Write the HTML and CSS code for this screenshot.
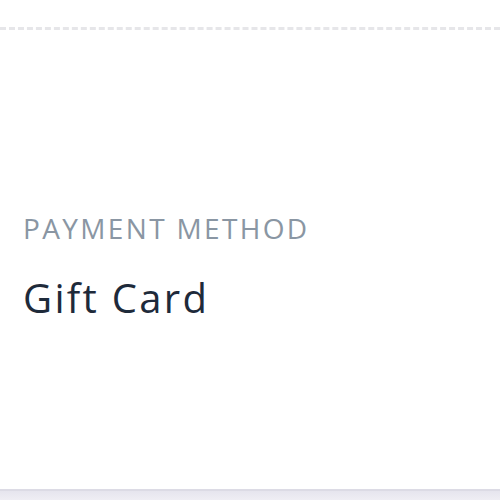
FILE: index.html
```html
<!DOCTYPE html>
<html>

<head>
  <meta charset="UTF-8">
  <meta name="viewport" content="width=device-width, initial-scale=1">
  <title>Payment method</title>

  <link rel="stylesheet" href="styles.css">
</head>

<body>
  <div class="sheet">
    <div class="perforation"></div>

    <div class="detail">
      <p class="detail_label">PAYMENT METHOD</p>
      <p class="detail_value">Gift Card</p>
    </div>
  </div>

  <div class="footer"></div>
</body>

</html>
```

FILE: styles.css
```css
* {
  margin: 0;
  padding: 0;
  box-sizing: border-box;
}

body {
  background-color: #fff;
  font-family: "Open Sans", "Noto Sans", sans-serif;
  width: 500px;
  height: 500px;
  overflow: hidden;
  display: flex;
  flex-direction: column;
}

.sheet {
  height: 489px;
  display: flex;
  flex-direction: column;
}

.perforation {
  margin-top: 27px;
  height: 4px;
  border-top: 3px dashed #e6e6e9;
}

.detail {
  padding: 180px 23px 0;
}

.detail_label {
  font-size: 28px;
  line-height: 34px;
  color: #8a96a3;
  letter-spacing: 2.35px;
}

.detail_value {
  margin-top: 30px;
  font-size: 40px;
  line-height: 46px;
  color: #1e2a3a;
  letter-spacing: 2.3px;
}

.footer {
  flex: 1;
  border-top: 2px solid #dcdbe5;
  background: linear-gradient(#e6e5ee, #efeef4);
}
```
